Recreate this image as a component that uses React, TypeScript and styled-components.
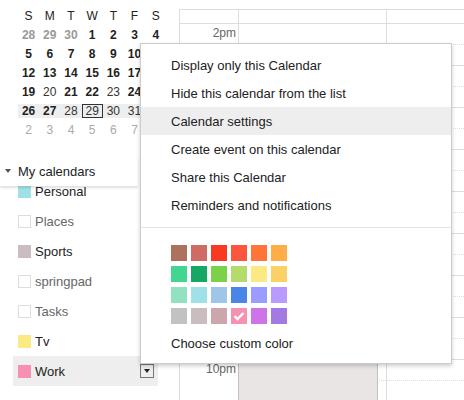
import React from 'react';
import styled, { createGlobalStyle } from 'styled-components';

const GlobalStyle = createGlobalStyle`
    html, body {
        margin: 0;
        padding: 0;
        background: #fff;
    }
    body {
        font-family: "Liberation Sans", Arial, sans-serif;
        color: #222;
        overflow: hidden;
    }
`;

interface Day {
    d: number;
    bold?: boolean;
    other?: boolean;
    today?: boolean;
}

const dayNames = ['S', 'M', 'T', 'W', 'T', 'F', 'S'];

const bold = (list: number[]): Day[] => list.map(d => ({ d, bold: true }));

const weeks: { days: Day[]; current?: boolean }[] = [
    {
        days: [
            { d: 28, other: true, bold: true },
            { d: 29, other: true, bold: true },
            { d: 30, other: true, bold: true },
            ...bold([1, 2, 3, 4])
        ]
    },
    { days: bold([5, 6, 7, 8, 9, 10, 11]) },
    { days: bold([12, 13, 14, 15, 16, 17, 18]) },
    {
        days: [
            { d: 19, bold: true },
            { d: 20 },
            { d: 21, bold: true },
            { d: 22, bold: true },
            { d: 23 },
            { d: 24, bold: true },
            { d: 25, bold: true }
        ]
    },
    {
        current: true,
        days: [
            { d: 26, bold: true },
            { d: 27, bold: true },
            { d: 28 },
            { d: 29, today: true },
            { d: 30 },
            { d: 31 },
            { d: 1, other: true }
        ]
    },
    { days: [2, 3, 4, 5, 6, 7, 8].map(d => ({ d, other: true })) }
];

interface CalendarEntry {
    name: string;
    color?: string;
    selected?: boolean;
}

const calendars: CalendarEntry[] = [
    { name: 'Personal', color: '#9fe1e7' },
    { name: 'Places' },
    { name: 'Sports', color: '#cabdbf' },
    { name: 'springpad' },
    { name: 'Tasks' },
    { name: 'Tv', color: '#fbe983' },
    { name: 'Work', color: '#f691b2', selected: true }
];

const menuItems = [
    'Display only this Calendar',
    'Hide this calendar from the list',
    'Calendar settings',
    'Create event on this calendar',
    'Share this Calendar',
    'Reminders and notifications'
];

const palette = [
    ['#ac725e', '#d06b64', '#f83a22', '#fa573c', '#ff7537', '#ffad46'],
    ['#42d692', '#16a765', '#7bd148', '#b3dc6c', '#fbe983', '#fad165'],
    ['#92e1c0', '#9fe1e7', '#9fc6e7', '#4986e7', '#9a9cff', '#b99aff'],
    ['#c2c2c2', '#cabdbf', '#cca6ac', '#f691b2', '#cd74e6', '#a47ae2']
];

// only the labels that show around the popup menu
const hours = ['2pm', '', '', '', '', '', '', '', '10pm'];

const Page = styled.div`
    position: relative;
    display: flex;
    width: 464px;
    height: 400px;
    overflow: hidden;
`;

const Sidebar = styled.aside`
    width: 179px;
    flex: none;
    display: flex;
    flex-direction: column;
`;

const MiniCal = styled.div`
    display: flex;
    flex-direction: column;
    gap: 5px;
    padding: 9px 0 0 18px;
    font-size: 12px;
`;

const Week = styled.div<{ $current?: boolean }>`
    display: grid;
    grid-template-columns: repeat(7, 21.2px);
    height: 14px;
    width: 160px;
    align-items: center;
    background: ${p => (p.$current ? '#eee' : 'transparent')};
`;

const DayCell = styled.div<{ $bold?: boolean; $other?: boolean; $today?: boolean }>`
    height: 14px;
    line-height: 12px;
    text-align: center;
    box-sizing: border-box;
    font-weight: ${p => (p.$bold ? 'bold' : 'normal')};
    color: ${p => (p.$other ? (p.$bold ? '#999' : '#aaa') : p.$bold ? '#222' : '#333')};
    border: 1px solid ${p => (p.$today ? '#333' : 'transparent')};
`;

const DayName = styled.div`
    text-align: center;
    color: #222;
`;

const MyCalendars = styled.section`
    margin-top: 19px;
    display: flex;
    flex-direction: column;
`;

const SectionHeader = styled.div`
    position: relative;
    z-index: 1;
    height: 30px;
    width: 138px;
    margin-bottom: -10px;
    display: flex;
    align-items: center;
    padding-left: 5px;
    box-sizing: border-box;
    background: #fff;
    box-shadow: 0 2px 2px rgba(0, 0, 0, 0.12);
    font-size: 13px;
    color: #222;
`;

const Caret = styled.span`
    width: 0;
    height: 0;
    margin-right: 7px;
    border-left: 3px solid transparent;
    border-right: 3px solid transparent;
    border-top: 4px solid #555;
`;

const CalRow = styled.div<{ $selected?: boolean }>`
    display: flex;
    align-items: center;
    height: 30px;
    width: 145px;
    margin-left: 13px;
    padding: 0 4px 0 5px;
    box-sizing: border-box;
    background: ${p => (p.$selected ? '#eee' : 'transparent')};
    font-size: 13px;
`;

const ColorBox = styled.span<{ $color?: string }>`
    width: 13px;
    height: 13px;
    flex: none;
    box-sizing: border-box;
    margin-right: 4px;
    background: ${p => p.$color || '#fff'};
    border: ${p => (p.$color ? 'none' : '1px solid #ddd')};
`;

const CalName = styled.span<{ $muted?: boolean }>`
    flex: 1;
    color: ${p => (p.$muted ? '#666' : '#222')};
`;

const DropButton = styled.span`
    width: 14px;
    height: 14px;
    box-sizing: border-box;
    border: 1px solid #777;
    background: #eee;
    display: flex;
    align-items: center;
    justify-content: center;

    &::after {
        content: '';
        border-left: 3.5px solid transparent;
        border-right: 3.5px solid transparent;
        border-top: 4px solid #222;
    }
`;

const Calendar = styled.div`
    flex: 1;
    margin-top: 9px;
    border-top: 1px solid #ddd;
    border-left: 1px solid #ddd;
    display: flex;
    flex-direction: column;
`;

const Row = styled.div<{ $height: number }>`
    display: grid;
    grid-template-columns: 59px 148px 1fr;
    height: ${p => p.$height}px;
    flex: none;
`;

const AllDayRow = styled(Row)`
    border-bottom: 1px solid #ddd;
`;

const Gutter = styled.div`
    border-right: 1px solid #ddd;
    text-align: right;
    padding: 2px 2px 0 0;
    font-size: 12px;
    color: #666;
`;

const DayColumn = styled.div`
    position: relative;
    display: flex;
    flex-direction: column;
    border-right: 1px solid #ddd;

    &:last-child {
        border-right: none;
    }
`;

const Half = styled.div<{ $solid?: boolean }>`
    height: 20px;
    border-bottom: 1px ${p => (p.$solid ? 'solid' : 'dotted')} #ddd;
`;

const Event = styled.div`
    position: absolute;
    left: -1px;
    top: 0;
    width: 138px;
    height: 60px;
    background: #e9e5e4;
    border-left: 1px solid #c9bcbd;
    border-right: 1px solid #c9bcbd;
`;

const Menu = styled.div`
    position: absolute;
    z-index: 5;
    left: 140px;
    top: 43px;
    width: 312px;
    box-sizing: border-box;
    background: #fff;
    border: 1px solid #ccc;
    box-shadow: 0 2px 4px rgba(0, 0, 0, 0.2);
    padding: 7px 0 6px;
    font-size: 13px;
    color: #222;
`;

const MenuItem = styled.div<{ $active?: boolean }>`
    height: 28px;
    line-height: 30px;
    padding-left: 30px;
    background: ${p => (p.$active ? '#eee' : 'transparent')};
    white-space: nowrap;
`;

const Separator = styled.div`
    height: 1px;
    margin: 8px 0 17px;
    background: #e5e5e5;
`;

const Swatches = styled.div`
    display: grid;
    grid-template-columns: repeat(6, 16px);
    grid-auto-rows: 16px;
    gap: 5px 4px;
    margin-left: 30px;
    margin-bottom: 5px;
`;

const Swatch = styled.div<{ $color: string }>`
    background: ${p => p.$color};
    display: flex;
    align-items: center;
    justify-content: center;
`;

const Check = () => (
    <svg width="12" height="10" viewBox="0 0 12 10">
        <path d="M1.5 5.2 L4.5 8 L10.5 2" fill="none" stroke="#fff" strokeWidth="2.4" />
    </svg>
);

function App() {
    return (
        <Page>
            <GlobalStyle />
            <Sidebar>
                <MiniCal>
                    <Week>
                        {dayNames.map((n, i) => (
                            <DayName key={i}>{n}</DayName>
                        ))}
                    </Week>
                    {weeks.map((w, i) => (
                        <Week key={i} $current={w.current}>
                            {w.days.map((day, j) => (
                                <DayCell key={j} $bold={day.bold} $other={day.other} $today={day.today}>
                                    {day.d}
                                </DayCell>
                            ))}
                        </Week>
                    ))}
                </MiniCal>
                <MyCalendars>
                    <SectionHeader>
                        <Caret />
                        My calendars
                    </SectionHeader>
                    {calendars.map(c => (
                        <CalRow key={c.name} $selected={c.selected}>
                            <ColorBox $color={c.color} />
                            <CalName $muted={!c.color}>{c.name}</CalName>
                            {c.selected && <DropButton />}
                        </CalRow>
                    ))}
                </MyCalendars>
            </Sidebar>
            <Calendar>
                <AllDayRow $height={13}>
                    <Gutter />
                    <DayColumn />
                    <DayColumn />
                </AllDayRow>
                {hours.map((h, i) => (
                    <Row key={i} $height={42}>
                        <Gutter>{h}</Gutter>
                        <DayColumn>
                            <Half />
                            <Half $solid />
                            {h === '10pm' && <Event />}
                        </DayColumn>
                        <DayColumn>
                            <Half />
                            <Half $solid />
                        </DayColumn>
                    </Row>
                ))}
            </Calendar>
            <Menu>
                {menuItems.map(m => (
                    <MenuItem key={m} $active={m === 'Calendar settings'}>
                        {m}
                    </MenuItem>
                ))}
                <Separator />
                <Swatches>
                    {palette.flat().map(c => (
                        <Swatch key={c} $color={c}>
                            {c === '#f691b2' && <Check />}
                        </Swatch>
                    ))}
                </Swatches>
                <MenuItem>Choose custom color</MenuItem>
            </Menu>
        </Page>
    );
}

export default App;
